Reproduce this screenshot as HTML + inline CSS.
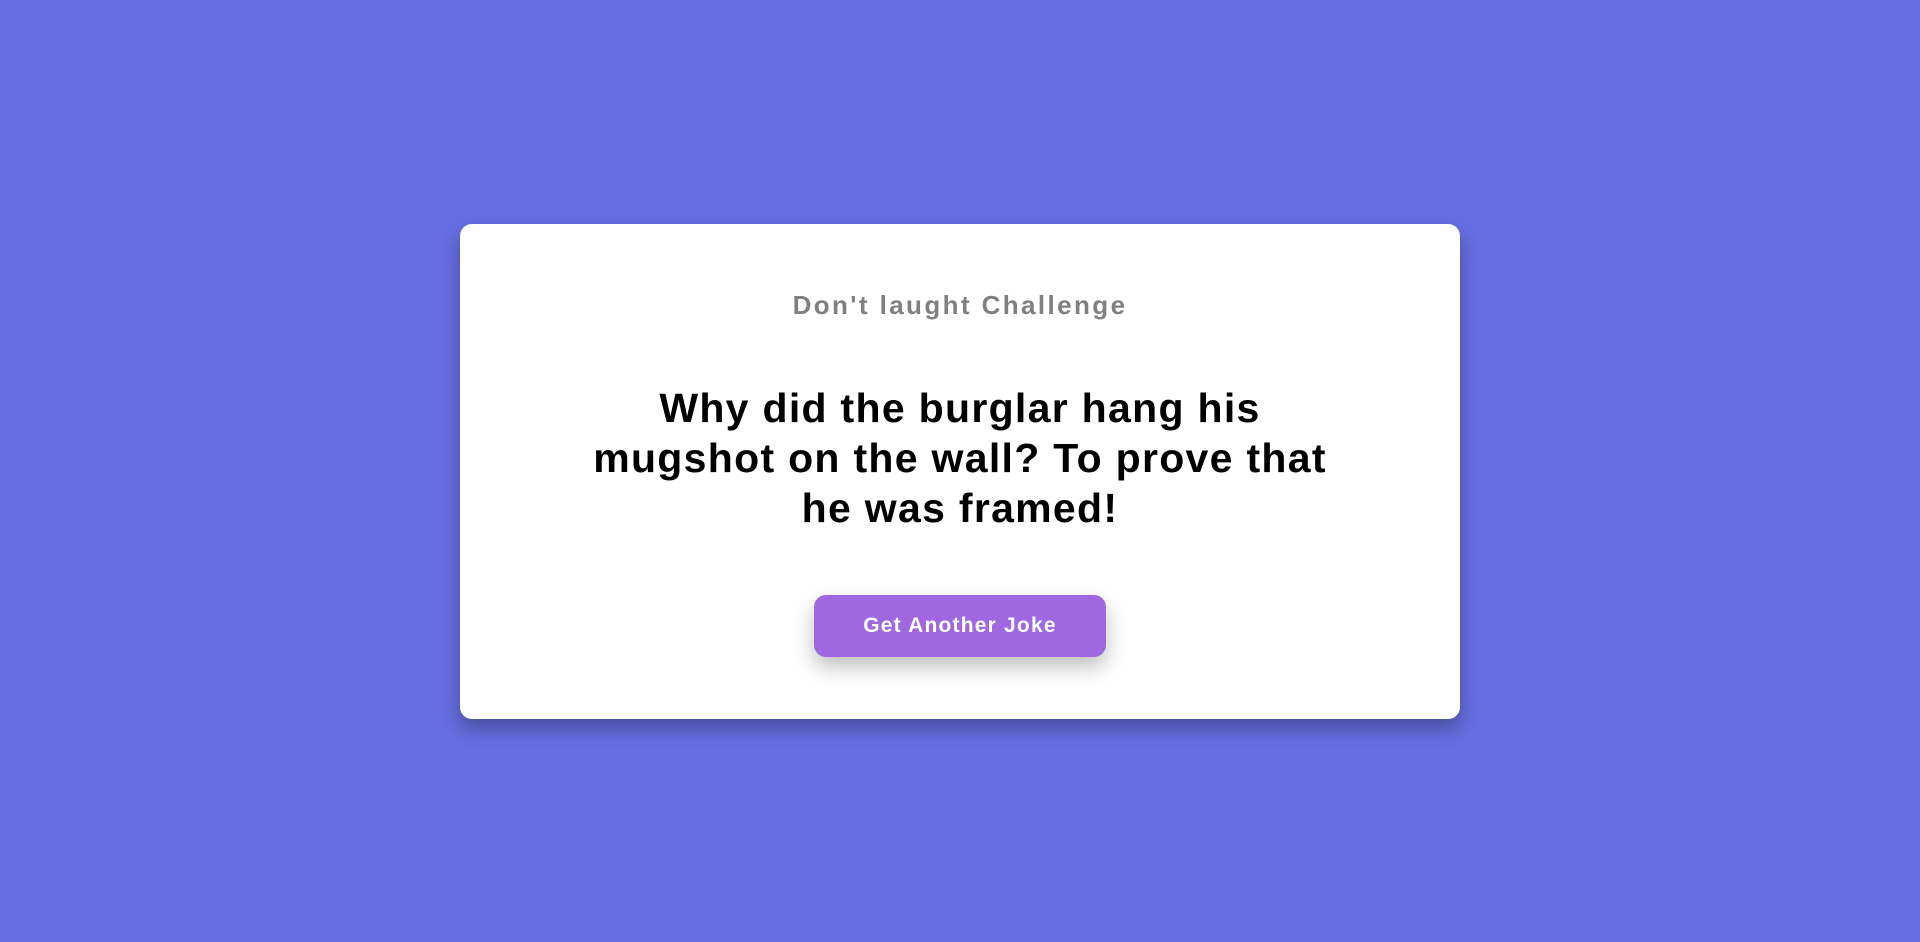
<!DOCTYPE html>
<html><head><style>
html,body{margin:0;height:942px;background:#676ee1;font-family:"Liberation Sans",sans-serif;overflow:hidden}
.card{position:absolute;left:460px;top:224px;width:1000px;height:495px;background:#fff;border-radius:12px;box-shadow:0 10px 20px rgba(0,0,0,.3);text-align:center}
.t{position:absolute;top:66px;left:0;right:0;font-size:26px;font-weight:bold;color:#808080;letter-spacing:2.4px}
.j{position:absolute;top:159px;left:110px;right:110px;font-size:41px;line-height:50px;font-weight:bold;color:#000;letter-spacing:1.3px}
.b{position:absolute;left:354px;top:371px;width:292px;height:62px;background:#9f68e0;border-radius:12px;color:#fff;font-weight:bold;font-size:21px;line-height:62px;box-shadow:0 10px 20px rgba(0,0,0,.25);letter-spacing:1.2px}
</style></head><body>
<div class="card">
<div class="t">Don't laught Challenge</div>
<div class="j">Why did the burglar hang his mugshot on the wall? To prove that he was framed!</div>
<div class="b">Get Another Joke</div>
</div>
</body></html>
